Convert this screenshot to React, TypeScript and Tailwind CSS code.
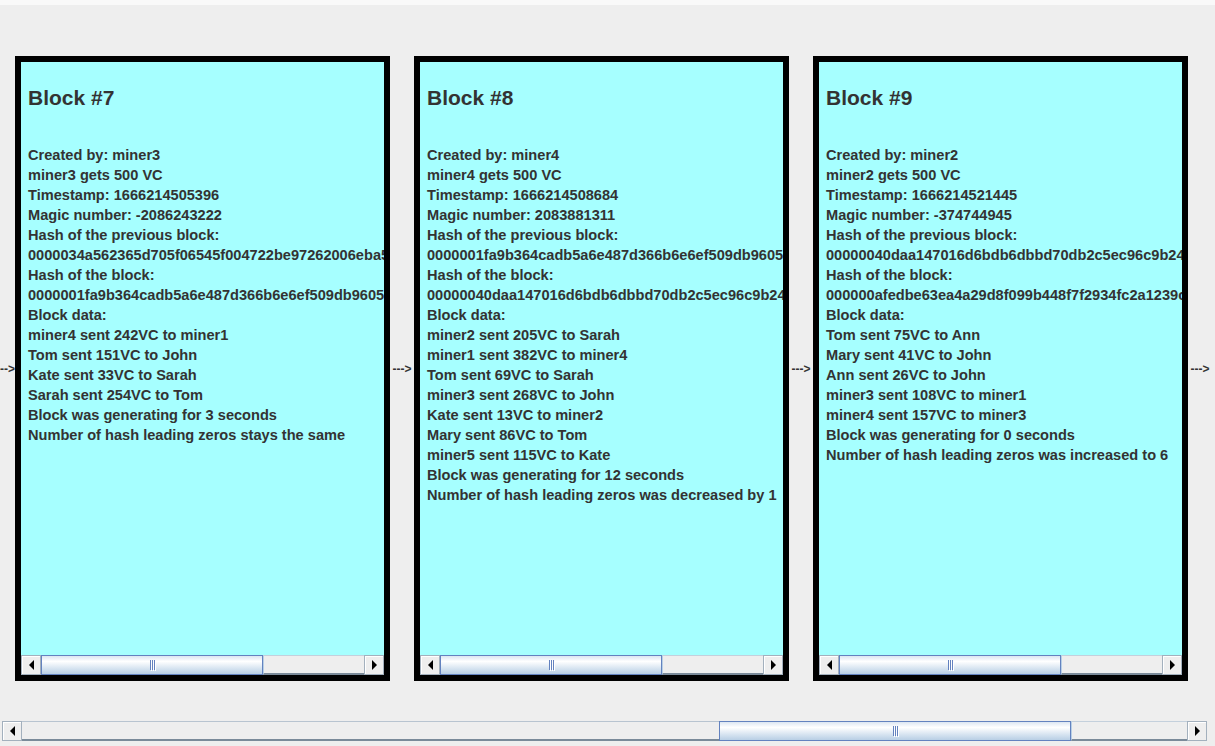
import React from 'react';

interface BlockInfo {
  id: number;
  lines: string[];
}

const blocks: BlockInfo[] = [
  {
    id: 7,
    lines: [
      'Created by: miner3',
      'miner3 gets 500 VC',
      'Timestamp: 1666214505396',
      'Magic number: -2086243222',
      'Hash of the previous block:',
      '0000034a562365d705f06545f004722be97262006eba5c3d81f07a2e',
      'Hash of the block:',
      '0000001fa9b364cadb5a6e487d366b6e6ef509db96051e7ac2d9b04f',
      'Block data:',
      'miner4 sent 242VC to miner1',
      'Tom sent 151VC to John',
      'Kate sent 33VC to Sarah',
      'Sarah sent 254VC to Tom',
      'Block was generating for 3 seconds',
      'Number of hash leading zeros stays the same',
    ],
  },
  {
    id: 8,
    lines: [
      'Created by: miner4',
      'miner4 gets 500 VC',
      'Timestamp: 1666214508684',
      'Magic number: 2083881311',
      'Hash of the previous block:',
      '0000001fa9b364cadb5a6e487d366b6e6ef509db96051e7ac2d9b04f',
      'Hash of the block:',
      '00000040daa147016d6bdb6dbbd70db2c5ec96c9b24e8f1a07c3d55b',
      'Block data:',
      'miner2 sent 205VC to Sarah',
      'miner1 sent 382VC to miner4',
      'Tom sent 69VC to Sarah',
      'miner3 sent 268VC to John',
      'Kate sent 13VC to miner2',
      'Mary sent 86VC to Tom',
      'miner5 sent 115VC to Kate',
      'Block was generating for 12 seconds',
      'Number of hash leading zeros was decreased by 1',
    ],
  },
  {
    id: 9,
    lines: [
      'Created by: miner2',
      'miner2 gets 500 VC',
      'Timestamp: 1666214521445',
      'Magic number: -374744945',
      'Hash of the previous block:',
      '00000040daa147016d6bdb6dbbd70db2c5ec96c9b24e8f1a07c3d55b',
      'Hash of the block:',
      '000000afedbe63ea4a29d8f099b448f7f2934fc2a1239cd0e86b71f2',
      'Block data:',
      'Tom sent 75VC to Ann',
      'Mary sent 41VC to John',
      'Ann sent 26VC to John',
      'miner3 sent 108VC to miner1',
      'miner4 sent 157VC to miner3',
      'Block was generating for 0 seconds',
      'Number of hash leading zeros was increased to 6',
    ],
  },
];

// Metal-look scroll button
function ScrollButton({ dir }: { dir: 'left' | 'right' }) {
  return (
    <div className="w-[20px] h-full shrink-0 flex items-center justify-center bg-[#eeeeee] border border-[#a3b0bd] shadow-[inset_1px_1px_0_#ffffff]">
      {dir === 'left' ? (
        <div className="w-0 h-0 border-y-[5px] border-y-transparent border-r-[5px] border-r-black" />
      ) : (
        <div className="w-0 h-0 border-y-[5px] border-y-transparent border-l-[5px] border-l-black" />
      )}
    </div>
  );
}

function Grip() {
  return (
    <div className="flex gap-[1px] h-[10px]">
      <div className="w-[1px] h-full bg-[#6382bf] shadow-[1px_1px_0_#ffffff]" />
      <div className="w-[1px] h-full bg-[#6382bf] shadow-[1px_1px_0_#ffffff]" />
      <div className="w-[1px] h-full bg-[#6382bf] shadow-[1px_1px_0_#ffffff]" />
    </div>
  );
}

function ScrollBar({ beforeClass, thumbClass }: { beforeClass: string; thumbClass: string }) {
  return (
    <div className="flex h-[20px] w-full bg-[#eeeeee]">
      <ScrollButton dir="left" />
      <div className={beforeClass + ' h-full shrink-0 bg-[#eeeeee] border-t border-[#b8c4d0] border-b-2 border-b-[#7a8a99]'} />
      <div
        className={
          thumbClass +
          ' h-full shrink-0 flex items-center justify-center border border-[#6382bf] bg-linear-to-b from-[#dce6f2] via-[#ffffff] via-30% to-[#b8cfe5]'
        }
      >
        <Grip />
      </div>
      <div className="flex-1 h-full bg-[#eeeeee] border-t border-[#c4d0dc] border-b-2 border-b-[#7a8a99] border-l border-l-[#b8cfe5]" />
      <ScrollButton dir="right" />
    </div>
  );
}

function Arrow() {
  return (
    <div className="w-[24px] shrink-0 flex justify-center text-[12px] font-bold text-[#333333] leading-none whitespace-nowrap">
      ---&gt;
    </div>
  );
}

function Block({ block }: { block: BlockInfo }) {
  return (
    <div className="w-[375px] h-[625px] shrink-0 border-[6px] border-black flex flex-col bg-[#a6ffff]">
      <div className="flex-1 overflow-hidden pl-[7px] pt-[24px] text-[#333333]">
        <h2 className="text-[21px] leading-[24px] font-bold whitespace-nowrap">Block #{block.id}</h2>
        <div className="mt-[35px] text-[14.6px] leading-[20px] font-bold">
          {block.lines.map((line, i) => (
            <div key={i} className="whitespace-nowrap">
              {line}
            </div>
          ))}
        </div>
      </div>
      <ScrollBar beforeClass="w-0" thumbClass="w-[222px]" />
    </div>
  );
}

export default function App() {
  return (
    <div className="w-[1215px] h-[746px] overflow-hidden bg-[#eeeeee] font-['Liberation_Sans',Arial,sans-serif]">
      <div className="h-[5px] bg-[#f9f9f9]" />

      <div className="mt-[51px] flex items-center w-[1215px] overflow-hidden">
        <div className="w-[15px] shrink-0 overflow-hidden flex justify-end text-[12px] font-bold text-[#333333] leading-none whitespace-nowrap">
          ---&gt;
        </div>
        {blocks.map((b) => (
          <React.Fragment key={b.id}>
            <Block block={b} />
            <Arrow />
          </React.Fragment>
        ))}
      </div>

      <div className="mt-[40px] pl-[2px] w-[1207px]">
        <ScrollBar beforeClass="w-[697px]" thumbClass="w-[352px]" />
      </div>
    </div>
  );
}
